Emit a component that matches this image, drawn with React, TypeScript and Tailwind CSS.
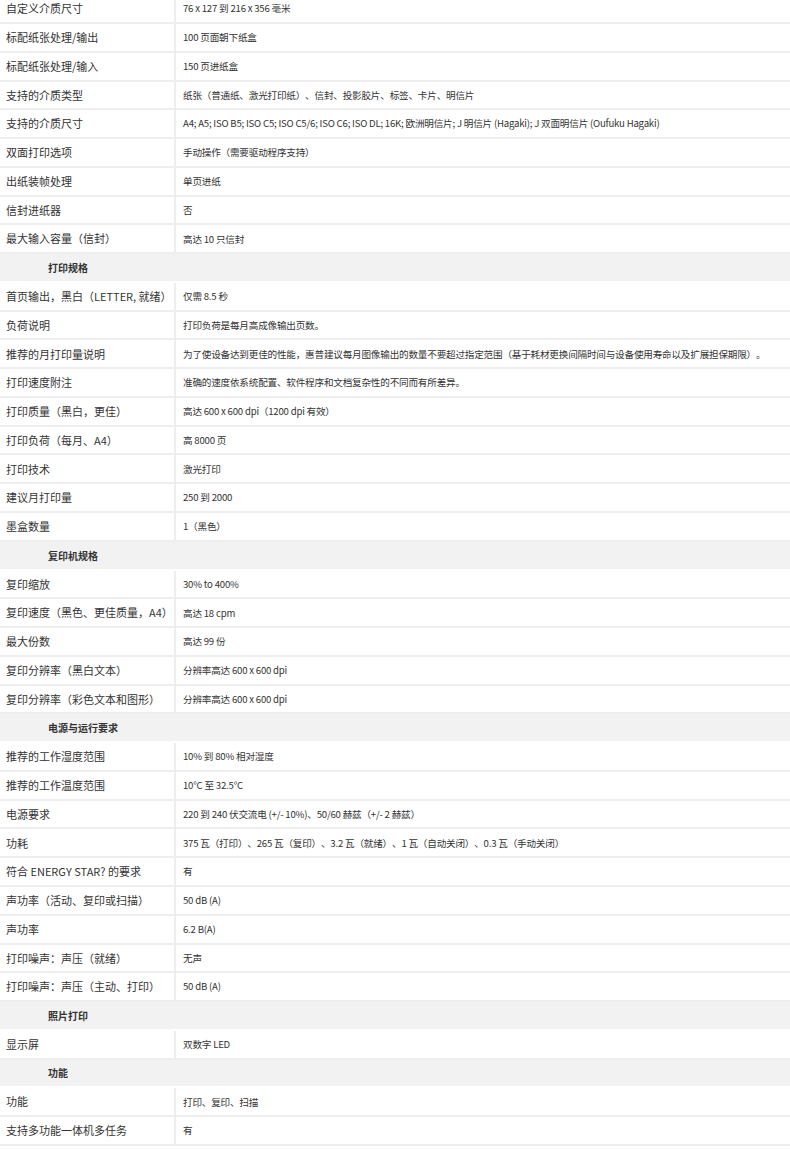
type Row = { k: string; v?: string; head?: boolean };

const rows: Row[] = [
  { k: '自定义介质尺寸', v: '76 x 127 到 216 x 356 毫米' },
  { k: '标配纸张处理/输出', v: '100 页面朝下纸盒' },
  { k: '标配纸张处理/输入', v: '150 页进纸盒' },
  { k: '支持的介质类型', v: '纸张（普通纸、激光打印纸）、信封、投影胶片、标签、卡片、明信片' },
  { k: '支持的介质尺寸', v: 'A4; A5; ISO B5; ISO C5; ISO C5/6; ISO C6; ISO DL; 16K; 欧洲明信片; J 明信片 (Hagaki); J 双面明信片 (Oufuku Hagaki)' },
  { k: '双面打印选项', v: '手动操作（需要驱动程序支持）' },
  { k: '出纸装帧处理', v: '单页进纸' },
  { k: '信封进纸器', v: '否' },
  { k: '最大输入容量（信封）', v: '高达 10 只信封' },
  { k: '打印规格', head: true },
  { k: '首页输出，黑白（LETTER, 就绪）', v: '仅需 8.5 秒' },
  { k: '负荷说明', v: '打印负荷是每月高成像输出页数。' },
  { k: '推荐的月打印量说明', v: '为了使设备达到更佳的性能，惠普建议每月图像输出的数量不要超过指定范围（基于耗材更换间隔时间与设备使用寿命以及扩展担保期限）。' },
  { k: '打印速度附注', v: '准确的速度依系统配置、软件程序和文档复杂性的不同而有所差异。' },
  { k: '打印质量（黑白，更佳）', v: '高达 600 x 600 dpi（1200 dpi 有效）' },
  { k: '打印负荷（每月、A4）', v: '高 8000 页' },
  { k: '打印技术', v: '激光打印' },
  { k: '建议月打印量', v: '250 到 2000' },
  { k: '墨盒数量', v: '1（黑色）' },
  { k: '复印机规格', head: true },
  { k: '复印缩放', v: '30% to 400%' },
  { k: '复印速度（黑色、更佳质量，A4）', v: '高达 18 cpm' },
  { k: '最大份数', v: '高达 99 份' },
  { k: '复印分辨率（黑白文本）', v: '分辨率高达 600 x 600 dpi' },
  { k: '复印分辨率（彩色文本和图形）', v: '分辨率高达 600 x 600 dpi' },
  { k: '电源与运行要求', head: true },
  { k: '推荐的工作湿度范围', v: '10% 到 80% 相对湿度' },
  { k: '推荐的工作温度范围', v: '10°C 至 32.5°C' },
  { k: '电源要求', v: '220 到 240 伏交流电 (+/- 10%)、50/60 赫兹（+/- 2 赫兹）' },
  { k: '功耗', v: '375 瓦（打印）、265 瓦（复印）、3.2 瓦（就绪）、1 瓦（自动关闭）、0.3 瓦（手动关闭）' },
  { k: '符合 ENERGY STAR? 的要求', v: '有' },
  { k: '声功率（活动、复印或扫描）', v: '50 dB (A)' },
  { k: '声功率', v: '6.2 B(A)' },
  { k: '打印噪声：声压（就绪）', v: '无声' },
  { k: '打印噪声：声压（主动、打印）', v: '50 dB (A)' },
  { k: '照片打印', head: true },
  { k: '显示屏', v: '双数字 LED' },
  { k: '功能', head: true },
  { k: '功能', v: '打印、复印、扫描' },
  { k: '支持多功能一体机多任务', v: '有' },
];

export default function App() {
  return (
    <div className="w-[790px] h-[1149px] overflow-hidden bg-white [text-spacing-trim:space-all] font-['Noto_Sans_CJK_SC','Noto_Sans',sans-serif]">
      <div className="-mt-[4.77px]">
        {rows.map((r, i) =>
          r.head ? (
            <div key={i} className="flex h-[28.77px] items-center border-b-2 border-[#ffffff] bg-[#f2f2f2] pl-[48px] text-[10px] font-bold text-[#333333]">
              {r.k}
            </div>
          ) : (
            <div key={i} className="flex h-[28.77px] border-b-2 border-[#eeeeee]">
              <div className="flex w-[176px] shrink-0 items-center border-r-2 border-[#eeeeee] pl-[6px] text-[11px] text-[#333333] whitespace-nowrap">
                {r.k}
              </div>
              <div className="flex items-center pl-[7px] text-[9.6px] tracking-[-0.2px] text-[#333333] whitespace-nowrap">
                {r.v}
              </div>
            </div>
          )
        )}
      </div>
    </div>
  );
}
